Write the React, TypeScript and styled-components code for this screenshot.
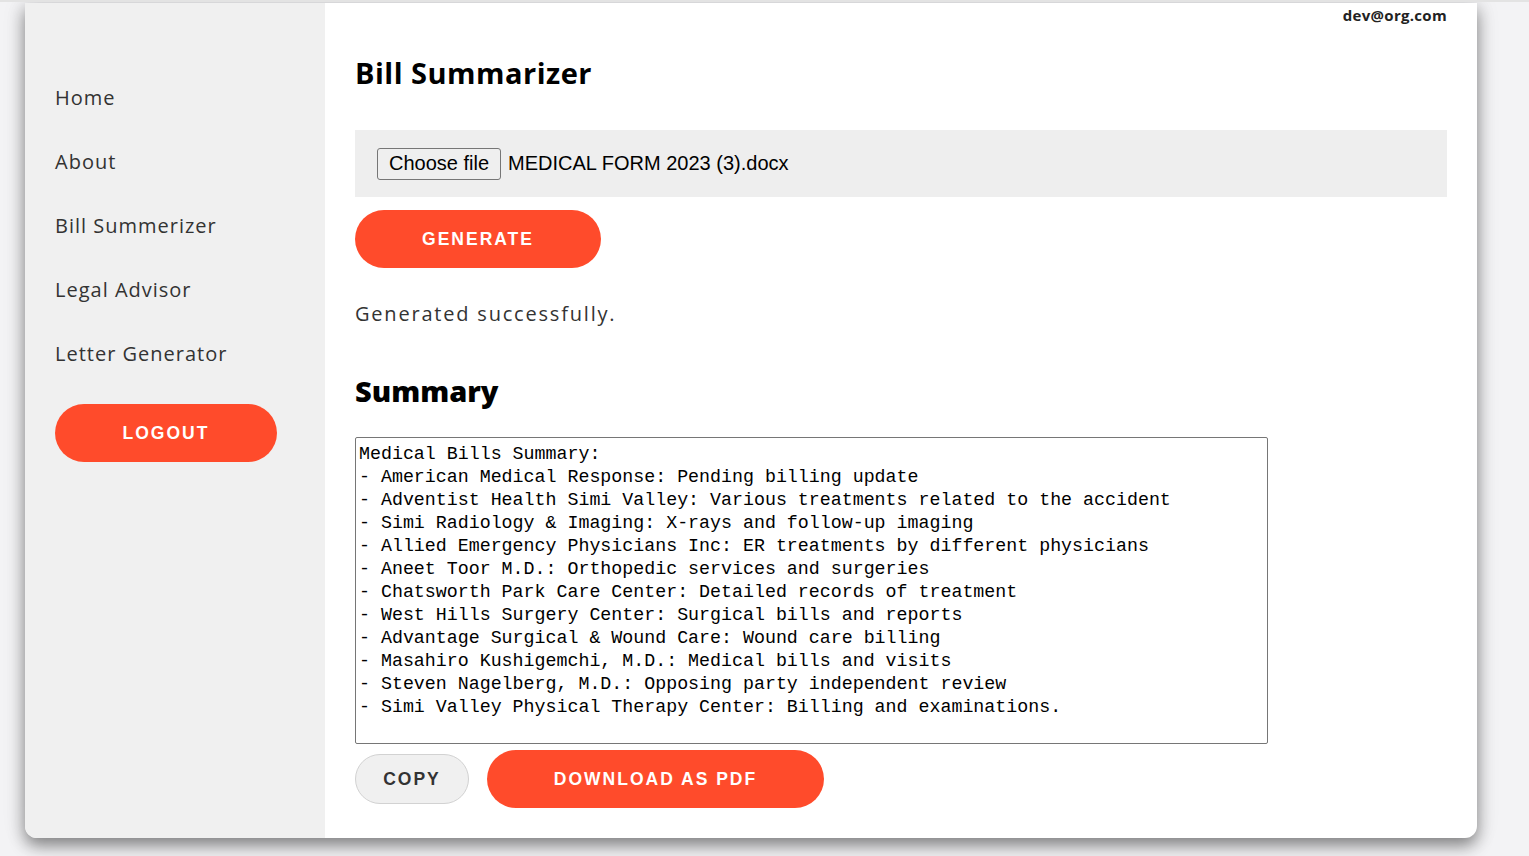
import styled, { createGlobalStyle } from 'styled-components';

const GlobalStyle = createGlobalStyle`
  html, body {
    margin: 0;
    padding: 0;
    background: #f3f3f5;
  }
  body {
    font-family: 'Open Sans', 'Liberation Sans', sans-serif;
    color: #333;
  }
  * {
    box-sizing: border-box;
  }
`;

const Page = styled.div`
  height: 856px;
  padding: 1px 52px 18px 25px;
  border-top: 2px solid #e3e3e3;
  overflow: hidden;
`;

const Card = styled.div`
  display: flex;
  height: 835px;
  background: #fff;
  border-radius: 0 0 12px 12px;
  box-shadow: 0 8px 16px rgba(0, 0, 0, 0.42), 0 0 24px rgba(0, 0, 0, 0.12);
  overflow: hidden;
`;

const Sidebar = styled.aside`
  width: 300px;
  flex-shrink: 0;
  background: #f0f0f0;
  padding: 81px 30px 0 30px;
  display: flex;
  flex-direction: column;
`;

const NavLink = styled.a`
  font-size: 20px;
  font-weight: 400;
  color: #333;
  line-height: 28px;
  height: 64px;
  text-decoration: none;
  letter-spacing: 1px;
`;

const Pill = styled.button<{ $w: number; $variant?: 'primary' | 'plain' }>`
  width: ${(p) => p.$w}px;
  height: ${(p) => (p.$variant === 'plain' ? 50 : 58)}px;
  border-radius: 30px;
  border: ${(p) => (p.$variant === 'plain' ? '1px solid #d2d2d2' : 'none')};
  background: ${(p) => (p.$variant === 'plain' ? '#f0f0f0' : '#ff4b2b')};
  color: ${(p) => (p.$variant === 'plain' ? '#333' : '#fff')};
  font-family: 'Liberation Sans', Arial, sans-serif;
  font-weight: 700;
  font-size: 17.5px;
  letter-spacing: 2px;
  text-transform: uppercase;
  cursor: pointer;
  flex-shrink: 0;
`;

const Main = styled.main`
  flex: 1;
  padding: 0 30px;
  display: flex;
  flex-direction: column;
  align-items: flex-start;
`;

const TopBar = styled.div`
  align-self: stretch;
  display: flex;
  justify-content: flex-end;
  padding-top: 2px;
  font-size: 15px;
  font-weight: 700;
  letter-spacing: 0.3px;
  color: #222;
  height: 22px;
`;

const Title = styled.h1<{ $weight?: number }>`
  margin: 0;
  font-size: 29px;
  font-weight: ${(p) => p.$weight ?? 700};
  letter-spacing: ${(p) => (p.$weight ? 0 : 0.5)}px;
  color: #000;
  line-height: 36px;
`;

const PageTitle = styled(Title)`
  margin-top: 30px;
`;

const FileBox = styled.div`
  align-self: stretch;
  margin-top: 39px;
  height: 67px;
  background: #eeeeee;
  display: flex;
  align-items: center;
  padding-left: 22px;
  gap: 7px;
  font-family: 'Liberation Sans', Arial, sans-serif;
  font-size: 20px;
  color: #000;
`;

const FileButton = styled.span`
  display: inline-flex;
  align-items: center;
  height: 32px;
  padding: 0 11px;
  border: 1px solid #767676;
  border-radius: 3px;
  background: #efefef;
`;

const GenerateRow = styled.div`
  margin-top: 13px;
`;

const Status = styled.p`
  margin: 32px 0 45px 0;
  font-size: 20px;
  line-height: 28px;
  color: #333;
  letter-spacing: 1.8px;
`;

const SummaryBox = styled.textarea`
  margin-top: 28px;
  width: 913px;
  height: 307px;
  border: 1px solid #767676;
  border-radius: 2px;
  padding: 5px 3px 3px 3px;
  font-family: Consolas, 'Liberation Mono', monospace;
  font-size: 18.3px;
  line-height: 23px;
  color: #000;
  resize: none;
  background: #fff;
`;

const Actions = styled.div`
  margin-top: 6px;
  display: flex;
  align-items: center;
  gap: 18px;
`;

const summary = `Medical Bills Summary:
- American Medical Response: Pending billing update
- Adventist Health Simi Valley: Various treatments related to the accident
- Simi Radiology & Imaging: X-rays and follow-up imaging
- Allied Emergency Physicians Inc: ER treatments by different physicians
- Aneet Toor M.D.: Orthopedic services and surgeries
- Chatsworth Park Care Center: Detailed records of treatment
- West Hills Surgery Center: Surgical bills and reports
- Advantage Surgical & Wound Care: Wound care billing
- Masahiro Kushigemchi, M.D.: Medical bills and visits
- Steven Nagelberg, M.D.: Opposing party independent review
- Simi Valley Physical Therapy Center: Billing and examinations.`;

const navItems = ['Home', 'About', 'Bill Summerizer', 'Legal Advisor', 'Letter Generator'];

export default function App() {
  return (
    <>
      <GlobalStyle />
      <Page>
        <Card>
          <Sidebar>
            {navItems.map((item) => (
              <NavLink key={item} href="#">
                {item}
              </NavLink>
            ))}
            <Pill $w={222}>Logout</Pill>
          </Sidebar>
          <Main>
            <TopBar>dev@org.com</TopBar>
            <PageTitle>Bill Summarizer</PageTitle>
            <FileBox>
              <FileButton>Choose file</FileButton>
              <span>MEDICAL FORM 2023 (3).docx</span>
            </FileBox>
            <GenerateRow>
              <Pill $w={246}>Generate</Pill>
            </GenerateRow>
            <Status>Generated successfully.</Status>
            <Title $weight={800}>Summary</Title>
            <SummaryBox readOnly value={summary} />
            <Actions>
              <Pill $w={114} $variant="plain">
                Copy
              </Pill>
              <Pill $w={337}>Download as PDF</Pill>
            </Actions>
          </Main>
        </Card>
      </Page>
    </>
  );
}
